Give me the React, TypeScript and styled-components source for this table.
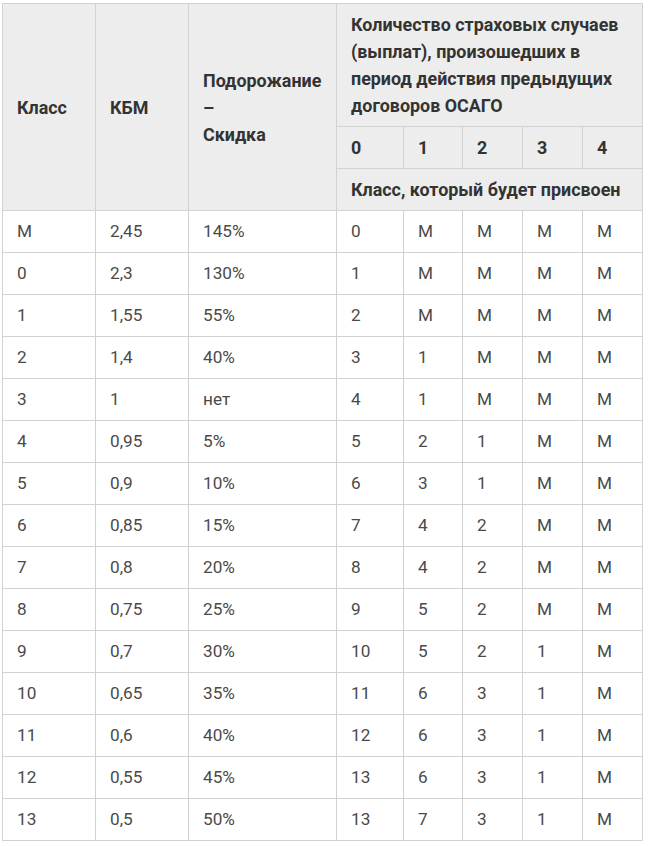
import React from "react";
import styled, { createGlobalStyle } from "styled-components";

const Global = createGlobalStyle`
  html, body { margin: 0; padding: 0; background: #fff; }
  body { font-family: Roboto, "Liberation Sans", Arial, sans-serif; }
`;

const Wrap = styled.div`
  padding: 3px 0 0 2px;
`;

const Table = styled.table`
  border-collapse: collapse;
  table-layout: fixed;
  width: 640px;
  line-height: 27px;
  color: #333;
`;

const Th = styled.th`
  background: #ededed;
  border: 1px solid #d2d2d2;
  padding: 7px 14px;
  text-align: left;
  vertical-align: middle;
  font-size: 17.9px;
  font-weight: 700;
  color: #333;
`;

const Td = styled.td`
  border: 1px solid #d2d2d2;
  padding: 7px 14px;
  text-align: left;
  vertical-align: middle;
  font-size: 17.2px;
  font-weight: 400;
  color: #4a4a4a;
`;

const rows: string[][] = [
  ["M", "2,45", "145%", "0", "M", "M", "M", "M"],
  ["0", "2,3", "130%", "1", "M", "M", "M", "M"],
  ["1", "1,55", "55%", "2", "M", "M", "M", "M"],
  ["2", "1,4", "40%", "3", "1", "M", "M", "M"],
  ["3", "1", "нет", "4", "1", "M", "M", "M"],
  ["4", "0,95", "5%", "5", "2", "1", "M", "M"],
  ["5", "0,9", "10%", "6", "3", "1", "M", "M"],
  ["6", "0,85", "15%", "7", "4", "2", "M", "M"],
  ["7", "0,8", "20%", "8", "4", "2", "M", "M"],
  ["8", "0,75", "25%", "9", "5", "2", "M", "M"],
  ["9", "0,7", "30%", "10", "5", "2", "1", "M"],
  ["10", "0,65", "35%", "11", "6", "3", "1", "M"],
  ["11", "0,6", "40%", "12", "6", "3", "1", "M"],
  ["12", "0,55", "45%", "13", "6", "3", "1", "M"],
  ["13", "0,5", "50%", "13", "7", "3", "1", "M"],
];

const widths = [93, 93, 148, 67, 59, 60, 60, 60];

export default function App() {
  return (
    <Wrap>
      <Global />
      <Table>
        <colgroup>
          {widths.map((w, i) => (
            <col key={i} style={{ width: w }} />
          ))}
        </colgroup>
        <thead>
          <tr>
            <Th rowSpan={3}>Класс</Th>
            <Th rowSpan={3}>КБМ</Th>
            <Th rowSpan={3}>
              Подорожание
              <br />–<br />
              Скидка
            </Th>
            <Th colSpan={5}>
              Количество страховых случаев (выплат), произошедших в период
              действия предыдущих договоров ОСАГО
            </Th>
          </tr>
          <tr>
            <Th>0</Th>
            <Th>1</Th>
            <Th>2</Th>
            <Th>3</Th>
            <Th>4</Th>
          </tr>
          <tr>
            <Th colSpan={5}>Класс, который будет присвоен</Th>
          </tr>
        </thead>
        <tbody>
          {rows.map((r, i) => (
            <tr key={i}>
              {r.map((c, j) => (
                <Td key={j}>{c}</Td>
              ))}
            </tr>
          ))}
        </tbody>
      </Table>
    </Wrap>
  );
}
